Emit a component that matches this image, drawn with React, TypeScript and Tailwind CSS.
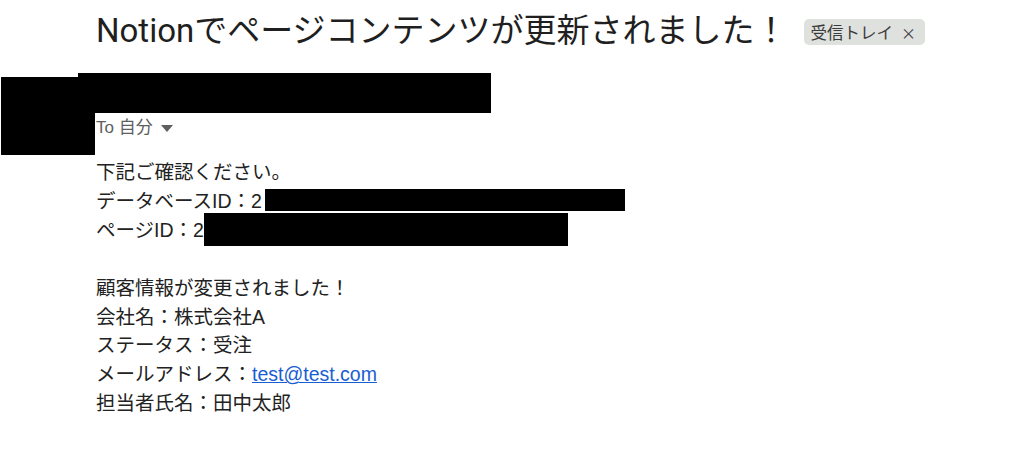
import React from "react";

function Redact({ left, top, width, height }: { left: number; top: number; width: number; height: number }) {
  // black box over hidden ids
  return (
    <span className="relative inline-block w-0 h-0 align-top">
      <span className="absolute bg-black" style={{ left, top, width, height }} />
    </span>
  );
}

const App = () => {
  return (
    <div className="relative w-[1020px] h-[457px] overflow-hidden bg-white font-['Liberation_Sans','Noto_Sans_CJK_JP',sans-serif] text-[#222222]">
      {/* avatar (redacted) */}
      <div className="absolute left-[1px] top-[77px] w-[94px] h-[78px] bg-black" />

      <div className="pl-[96px]">
        {/* subject */}
        <div className="flex items-center pt-[11px]">
          <h1 className="text-[33px] leading-[40px] text-[#1f1f1f] font-['Roboto','Noto_Sans_CJK_JP',sans-serif]">
            Notionでページコンテンツが更新されました！
          </h1>
          <span className="ml-[16px] mt-[2px] flex h-[26px] items-center gap-[8px] rounded-[5px] bg-[#dfe1df] pl-[7px] pr-[9px] text-[16.5px] text-[#3c3c3c] font-['Noto_Sans_CJK_JP',sans-serif]">
            受信トレイ
            <span className="text-[15px] leading-none">×</span>
          </span>
        </div>

        {/* sender (redacted) */}
        <div className="-ml-[18px] mt-[22px] h-[40px] w-[413px] bg-black" />

        {/* recipients */}
        <div className="flex h-[30px] items-center text-[17px] text-[#5e5e5e]">
          <span>To 自分</span>
          <svg className="ml-[8px] mt-[1px]" width="12" height="7" viewBox="0 0 12 7">
            <path d="M0 0h12L6 7z" fill="#5e5e5e" />
          </svg>
        </div>

        {/* body */}
        <div className="mt-[15px] text-[19.5px] leading-[28.9px]">
          <div>下記ご確認ください。</div>
          <div>
            データベースID：2
            <Redact left={3} top={2} width={360} height={22} />
          </div>
          <div>
            ページID：2
            <Redact left={0} top={-3} width={364} height={33} />
          </div>
          <div>&nbsp;</div>
          <div>顧客情報が変更されました！</div>
          <div>会社名：株式会社A</div>
          <div>ステータス：受注</div>
          <div>
            メールアドレス：
            <a href="#" className="text-[#1a5ed4] underline">
              test@test.com
            </a>
          </div>
          <div>担当者氏名：田中太郎</div>
        </div>
      </div>
    </div>
  );
};

export default App;
